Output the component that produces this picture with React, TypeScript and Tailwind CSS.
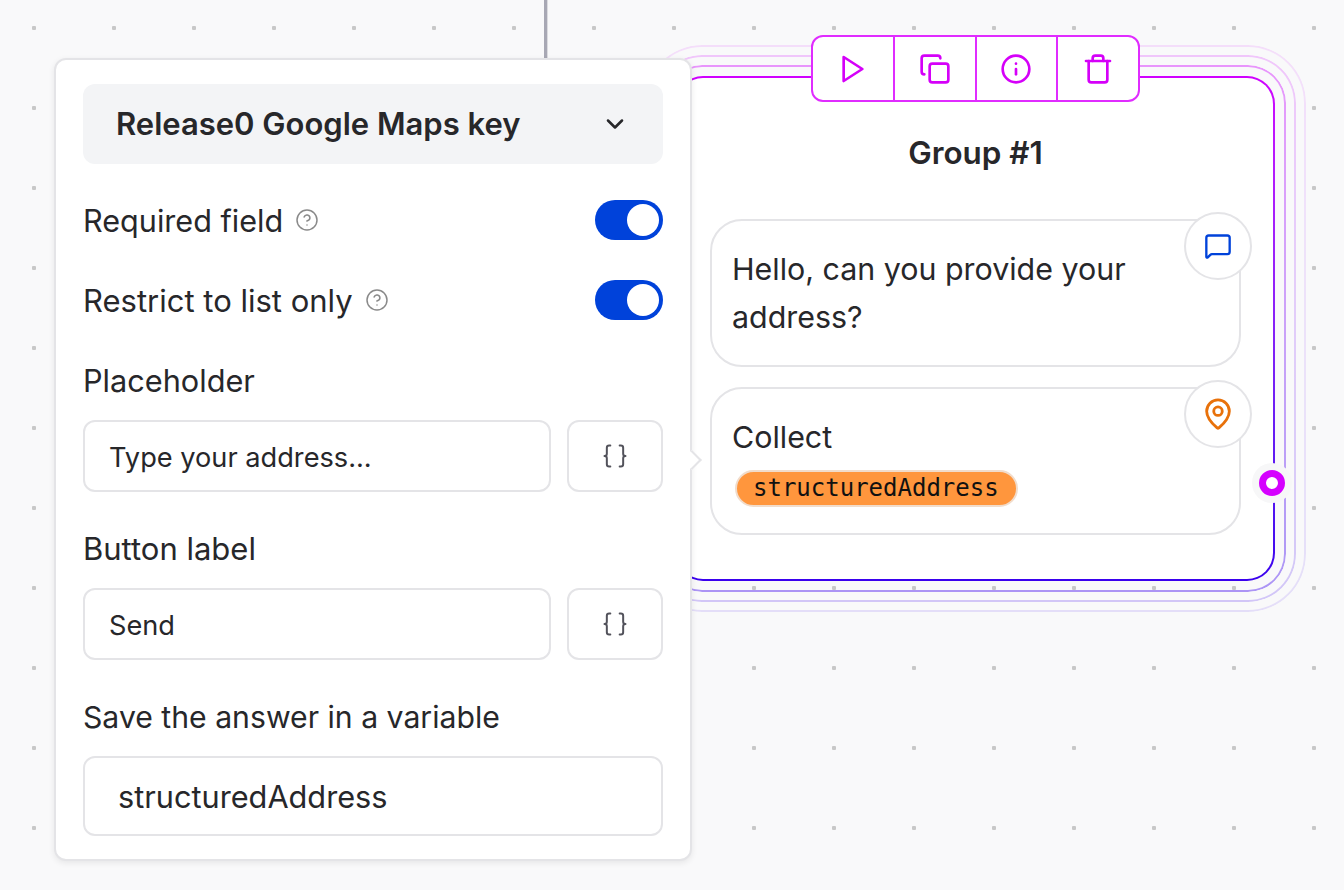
import { Braces, ChevronDown, CircleHelp, Copy, Info, MapPin, MessageSquare, Trash } from 'lucide-react'

function HelpIcon() {
  return <CircleHelp size={24} strokeWidth={1.5} className="text-[#8a8a8a]" />
}

function Toggle() {
  return (
    <div className="ml-auto flex h-10 w-[68px] items-center justify-end rounded-full bg-[#0042da] pr-1">
      <div className="h-8 w-8 rounded-full bg-white" />
    </div>
  )
}

function ToggleRow({ label, size }: { label: string; size: string }) {
  return (
    <div className={`flex h-10 items-center gap-[12px] text-[#27272a] ${size}`}>
      <span className="pt-[2px]">{label}</span>
      <HelpIcon />
      <Toggle />
    </div>
  )
}

function TextRow({ label, value, size }: { label: string; value: string; size: string }) {
  return (
    <div className="flex flex-col">
      <div className={`mb-[19px] h-10 leading-10 text-[#27272a] ${size}`}>{label}</div>
      <div className="flex gap-4">
        <div className="flex h-[72px] flex-1 items-center rounded-xl border-2 border-[#e4e4e7] pl-[24px] pt-[4px] text-[27.2px] text-[#27272a]">
          {value}
        </div>
        <div className="flex h-[72px] w-[96px] items-center justify-center rounded-xl border-2 border-[#e4e4e7] text-[#52525b]">
          <Braces size={28} strokeWidth={1.7} />
        </div>
      </div>
    </div>
  )
}

function SettingsPanel() {
  return (
    <div className="absolute left-[54px] top-[58px] z-20 flex h-[803px] w-[638px] flex-col rounded-xl border-2 border-[#e4e4e7] bg-white pl-[27px] pr-[27px] pt-[24px] shadow-[0_2px_6px_rgba(0,0,0,0.08)]">
      <div className="flex h-20 items-center justify-between rounded-xl bg-[#f3f4f6] pl-[33px] pr-[34px] text-[31px] font-semibold text-[#27272a]">
        <span>Release0 Google Maps key</span>
        <ChevronDown size={28} strokeWidth={2.2} />
      </div>
      <div className="mt-9 flex flex-col gap-10">
        <ToggleRow label="Required field" size="text-[30.6px]" />
        <ToggleRow label="Restrict to list only" size="text-[31px]" />
      </div>
      <div className="mt-[41px] flex flex-col gap-[37px]">
        <TextRow label="Placeholder" value="Type your address..." size="text-[30.7px]" />
        <TextRow label="Button label" value="Send" size="text-[31px]" />
        <div className="flex flex-col">
          <div className="mb-[19px] h-10 text-[30.2px] leading-10 text-[#27272a]">Save the answer in a variable</div>
          <div className="flex h-20 items-center rounded-xl border-2 border-[#e4e4e7] pl-[33px] pt-[2px] text-[30.7px] text-[#27272a]">
            structuredAddress
          </div>
        </div>
      </div>
      {/* popover arrow */}
      <div className="absolute left-[629px] top-[393px] h-[14px] w-[14px] rotate-45 border-r-2 border-t-2 border-[#e4e4e7] bg-white" />
    </div>
  )
}

function BlockCard({ children, icon }: { children: React.ReactNode; icon: React.ReactNode }) {
  return (
    <div className="relative h-[148px] rounded-[32px] border-2 border-[#e4e4e7] bg-white pl-5 pr-5 pt-[24px] text-[30.4px] leading-[48px] text-[#27272a]">
      {children}
      <div className="absolute right-[-13px] top-[-9px] flex h-[68px] w-[68px] items-center justify-center rounded-full border-2 border-[#e4e4e7] bg-white">
        {icon}
      </div>
    </div>
  )
}

function GroupNode() {
  return (
    <div className="absolute left-[675px] top-[76px] h-[505px] w-[600px]">
      <div className="absolute -inset-[11px] rounded-[38px] bg-gradient-to-b from-[#d000ff] to-[#3a00ee] p-[2px] opacity-40 [mask:linear-gradient(#000_0_0)_content-box_exclude,linear-gradient(#000_0_0)]" />
      <div className="absolute -inset-[21px] rounded-[48px] bg-gradient-to-b from-[#d000ff] to-[#3a00ee] p-[2px] opacity-20 [mask:linear-gradient(#000_0_0)_content-box_exclude,linear-gradient(#000_0_0)]" />
      <div className="absolute -inset-[31px] rounded-[58px] bg-gradient-to-b from-[#d000ff] to-[#3a00ee] p-[2px] opacity-10 [mask:linear-gradient(#000_0_0)_content-box_exclude,linear-gradient(#000_0_0)]" />

      <div className="absolute inset-0 rounded-[28px] bg-gradient-to-b from-[#d000ff] to-[#3a00ee] p-[2px]">
        <div className="flex h-full flex-col rounded-[26px] bg-white pl-[33px] pr-[32px] pt-[55px]">
          <div className="text-center text-[31.4px] font-semibold leading-10 text-[#27272a]">Group #1</div>
          <div className="mt-[46px] flex flex-col gap-[20px]">
            <BlockCard icon={<MessageSquare size={28} strokeWidth={2} className="text-[#0042da]" />}>
              <div>Hello, can you provide your</div>
              <div>address?</div>
            </BlockCard>
            <BlockCard icon={<MapPin size={34} strokeWidth={2} className="text-[#e8710a]" />}>
              <div>Collect</div>
              <div className="ml-[3px] mt-[-2px] inline-flex h-[37px] items-center rounded-full border-2 border-[#f1dccb] bg-[#ff963d] pl-[16px] pr-[17px] font-['DejaVu_Sans_Mono',monospace] text-[24px] leading-none text-[#111111]">
                structuredAddress
              </div>
            </BlockCard>
          </div>
        </div>
      </div>

      {/* toolbar */}
      <div className="absolute left-[136px] top-[-41px] flex h-[67px] w-[329px] rounded-xl border-2 border-[#e02cff] bg-white text-[#d500f9]">
        <div className="flex flex-1 items-center justify-center border-r-2 border-[#e02cff]">
          <svg width="32" height="32" viewBox="0 0 24 24" fill="none" stroke="currentColor" strokeWidth="2" strokeLinecap="round" strokeLinejoin="round">
            <polygon points="5 3 19 12 5 21 5 3" />
          </svg>
        </div>
        <div className="flex flex-1 items-center justify-center border-r-2 border-[#e02cff]">
          <Copy size={32} strokeWidth={2} />
        </div>
        <div className="flex flex-1 items-center justify-center border-r-2 border-[#e02cff]">
          <Info size={32} strokeWidth={2} />
        </div>
        <div className="flex flex-1 items-center justify-center">
          <Trash size={32} strokeWidth={2} />
        </div>
      </div>

      {/* connector */}
      <div className="absolute left-[577px] top-[387px] flex h-10 w-10 items-center justify-center rounded-full bg-[#f7f7f8]">
        <div className="h-[26px] w-[26px] rounded-full border-[7px] border-[#d500ff] bg-white" />
      </div>
    </div>
  )
}

export default function App() {
  return (
    <div className="relative h-[890px] w-full overflow-hidden bg-[#f9f9fa] bg-[radial-gradient(circle,#c8c8c8_2px,transparent_2.5px)] bg-[length:80px_80px] bg-[position:-6px_-12px] font-['Inter',sans-serif]">
      <div className="absolute left-[544px] top-0 h-[60px] w-[4px] border-r border-[#dcdce0] bg-[#a8a8b4]" />
      <GroupNode />
      <SettingsPanel />
    </div>
  )
}
